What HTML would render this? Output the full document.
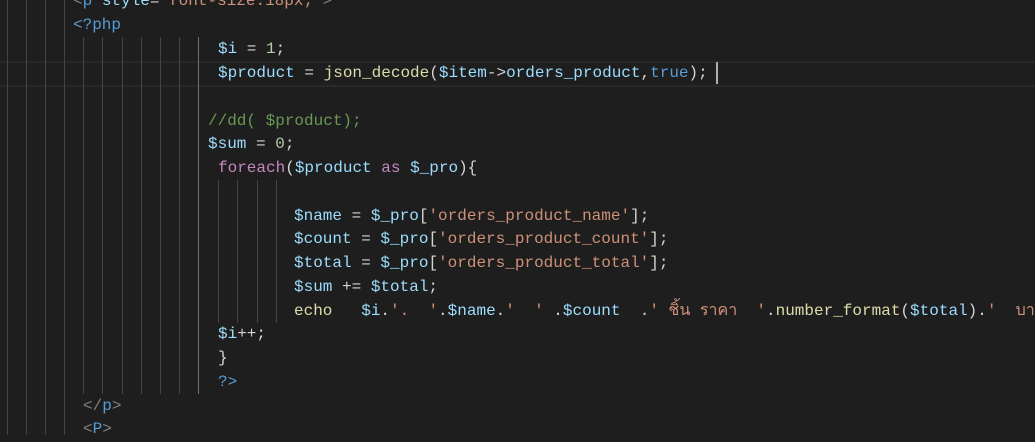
<!DOCTYPE html>
<html><head><meta charset="utf-8"><style>
body{margin:0;width:1035px;height:435px;background:#1e1e1e;overflow:hidden;position:relative;font-family:"Liberation Mono",monospace;font-size:16px}
.l{position:absolute;left:0;height:23.85px;line-height:23.85px;white-space:pre;color:#d4d4d4}
.g{position:absolute;width:1px;background:#444}
.w{position:absolute;left:0;top:2px;width:1035px;height:435px}
.v{color:#9cdcfe}.f{color:#dcdcaa}.s{color:#ce9178}.c{color:#6a9955}.k{color:#c586c0}.b{color:#569cd6}.n{color:#b5cea8}.t{color:#808080}
</style></head><body>
<div style="position:absolute;left:0;top:61px;width:1035px;height:22px;border-top:2px solid #282828;border-bottom:2px solid #282828"></div>
<div class="g" style="left:7px;top:0;height:435px"></div>
<div class="g" style="left:26px;top:0;height:435px"></div>
<div class="g" style="left:45px;top:0;height:435px"></div>
<div class="g" style="left:64px;top:0;height:435px"></div>
<div class="g" style="left:83px;top:37px;height:357px"></div>
<div class="g" style="left:102px;top:37px;height:357px"></div>
<div class="g" style="left:122px;top:37px;height:357px"></div>
<div class="g" style="left:141px;top:37px;height:357px"></div>
<div class="g" style="left:160px;top:37px;height:357px"></div>
<div class="g" style="left:179px;top:37px;height:357px"></div>
<div class="g" style="left:198px;top:37px;height:357px;background:#707070"></div>
<div class="g" style="left:218px;top:180px;height:143px"></div>
<div class="g" style="left:237px;top:180px;height:143px"></div>
<div class="g" style="left:257px;top:180px;height:143px"></div>
<div class="g" style="left:276px;top:180px;height:143px"></div>
<div style="position:absolute;left:716px;top:62px;width:2px;height:22px;background:#aeafad"></div>
<div class="w">
<div class="l" style="left:73px;top:-12px"><span class="t">&lt;</span><span class="b">p</span> <span class="v">style</span>=<span class="s">"font-size:18px;"</span><span class="t">&gt;</span></div>
<div class="l" style="left:73px;top:12px"><span class="b">&lt;?php</span></div>
<div class="l" style="left:218px;top:36px"><span class="v">$i</span> = <span class="n">1</span>;</div>
<div class="l" style="left:218px;top:60px"><span class="v">$product</span> = <span class="f">json_decode</span>(<span class="v">$item</span>-&gt;<span class="v">orders_product</span>,<span class="b">true</span>);</div>
<div class="l" style="left:208px;top:108px"><span class="c">//dd( $product);</span></div>
<div class="l" style="left:208px;top:131px"><span class="v">$sum</span> = <span class="n">0</span>;</div>
<div class="l" style="left:218px;top:155px"><span class="k">foreach</span>(<span class="v">$product</span> <span class="k">as</span> <span class="v">$_pro</span>){</div>
<div class="l" style="left:294px;top:203px"><span class="v">$name</span> = <span class="v">$_pro</span>[<span class="s">'orders_product_name'</span>];</div>
<div class="l" style="left:294px;top:226px"><span class="v">$count</span> = <span class="v">$_pro</span>[<span class="s">'orders_product_count'</span>];</div>
<div class="l" style="left:294px;top:250px"><span class="v">$total</span> = <span class="v">$_pro</span>[<span class="s">'orders_product_total'</span>];</div>
<div class="l" style="left:294px;top:274px"><span class="v">$sum</span> += <span class="v">$total</span>;</div>
<div class="l" style="left:294px;top:298px"><span class="f">echo</span>   <span class="v">$i</span>.<span class="s">'.  '</span>.<span class="v">$name</span>.<span class="s">'  '</span> .<span class="v">$count</span>  .<span class="s">' ชิ้น ราคา  '</span>.<span class="f">number_format</span>(<span class="v">$total</span>).<span class="s">'  บาท'</span></div>
<div class="l" style="left:218px;top:321px"><span class="v">$i</span>++;</div>
<div class="l" style="left:218px;top:345px">}</div>
<div class="l" style="left:218px;top:369px"><span class="b">?&gt;</span></div>
<div class="l" style="left:83px;top:393px"><span class="t">&lt;/</span><span class="b">p</span><span class="t">&gt;</span></div>
<div class="l" style="left:83px;top:416px"><span class="t">&lt;</span><span class="b">P</span><span class="t">&gt;</span></div>
</div>
</body></html>
